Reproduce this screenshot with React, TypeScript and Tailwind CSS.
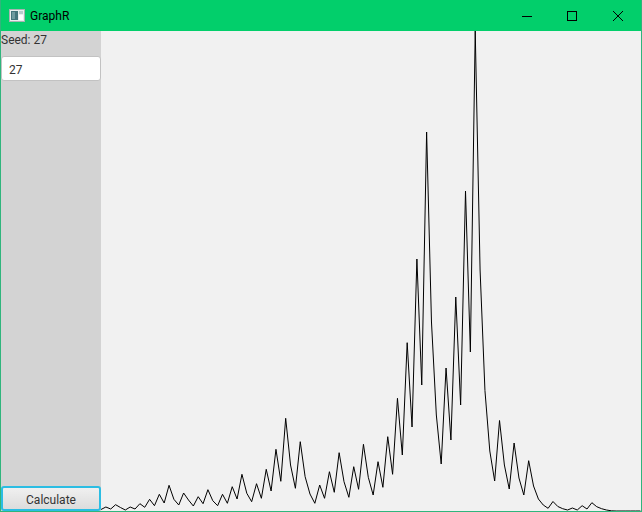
const ys = [
  509.5, 507, 509, 504.7, 507.5, 510, 507, 509, 503.7, 507.3,
  499.3, 505.7, 494.3, 503, 485.3, 499.3, 505, 493, 500, 506,
  496.7, 503.7, 489.7, 500.7, 505.7, 494.3, 503.3, 486.7, 499, 474.3,
  493.3, 501.7, 483.7, 498.3, 469.3, 491, 449.3, 481.3, 418.3, 465,
  488.3, 441.7, 476.7, 494, 503.3, 485, 498.3, 471.7, 492.3, 452.7,
  481.7, 497.3, 466.7, 489.3, 444.3, 477.3, 495, 461.7, 487.3, 436.7,
  474.3, 398.3, 455, 342.7, 427, 259, 385, 132, 322, 415,
  464, 368, 440, 297, 405, 191, 352, 31, 270, 390.5,
  451, 481, 420.5, 465, 489, 443, 478, 495, 460.7, 486,
  499, 505, 508.3, 501.5, 506.5, 508.7, 510, 508, 510, 505.7,
  509, 502.7, 506.7, 508.7, 510, 510.8, 511, 511, 511, 511, 511, 511,
];
const points = ys.map((y, i) => `${(101 + i * 4.86).toFixed(2)},${y}`).join(" ");

function AppIcon() {
  return (
    <svg width="16" height="13" viewBox="0 0 16 13">
      <rect x="0.5" y="0.5" width="15" height="12" fill="#e9efef" stroke="#a9b3b3" />
      <rect x="2" y="2" width="7" height="9" fill="#44757c" />
      <rect x="3" y="3" width="3" height="7" fill="#6f9ba0" />
      <rect x="10" y="2" width="4" height="3" fill="#b9cccc" />
      <rect x="10" y="6" width="4" height="5" fill="#ffffff" />
    </svg>
  );
}

export default function App() {
  return (
    <div className="w-[642px] h-[512px] flex flex-col border-x border-b border-[#2fb57c] bg-[#f1f1f1] font-['Roboto','Open_Sans',sans-serif] text-[12px] text-[#333333] overflow-hidden">
      <div className="h-[31px] shrink-0 bg-[#02cf6b] flex items-center -mx-px pl-[9px] text-black">
        <AppIcon />
        <span className="ml-[5px] text-[12px] leading-none">GraphR</span>
        <div className="ml-auto flex items-center pr-[19px] gap-[35px]">
          <svg width="10" height="10" viewBox="0 0 10 10" stroke="black" fill="none">
            <path d="M0 5.5H10" />
          </svg>
          <svg width="10" height="10" viewBox="0 0 10 10" className="mr-[1px]" stroke="black" fill="none">
            <rect x="0.5" y="0.5" width="9" height="9" />
          </svg>
          <svg width="10" height="10" viewBox="0 0 10 10" stroke="black" fill="none">
            <path d="M0 0L10 10M10 0L0 10" />
          </svg>
        </div>
      </div>
      <div className="flex-1 min-h-0 flex">
        <div className="w-[100px] shrink-0 bg-[#d3d3d3] flex flex-col">
          <div className="h-[18px] leading-[18px]">Seed: 27</div>
          <input
            readOnly
            value="27"
            className="mt-[7px] h-[25px] w-full rounded-[3px] border border-[#c2c2c2] bg-white pl-[7px] pt-[2px] text-[12px] text-[#333333] outline-none"
          />
          <button className="mt-auto h-[25px] w-full rounded-[3px] border-2 border-[#2bbde3] bg-gradient-to-b from-[#f0f0f0] to-[#dcdcdc] pt-[2px] text-[12px] text-[#333333]">
            Calculate
          </button>
        </div>
        <svg className="flex-1 min-w-0 h-full" viewBox="101 31 540 480" fill="none">
          <polyline points={points} stroke="black" strokeWidth="1" strokeLinejoin="miter" />
        </svg>
      </div>
    </div>
  );
}
